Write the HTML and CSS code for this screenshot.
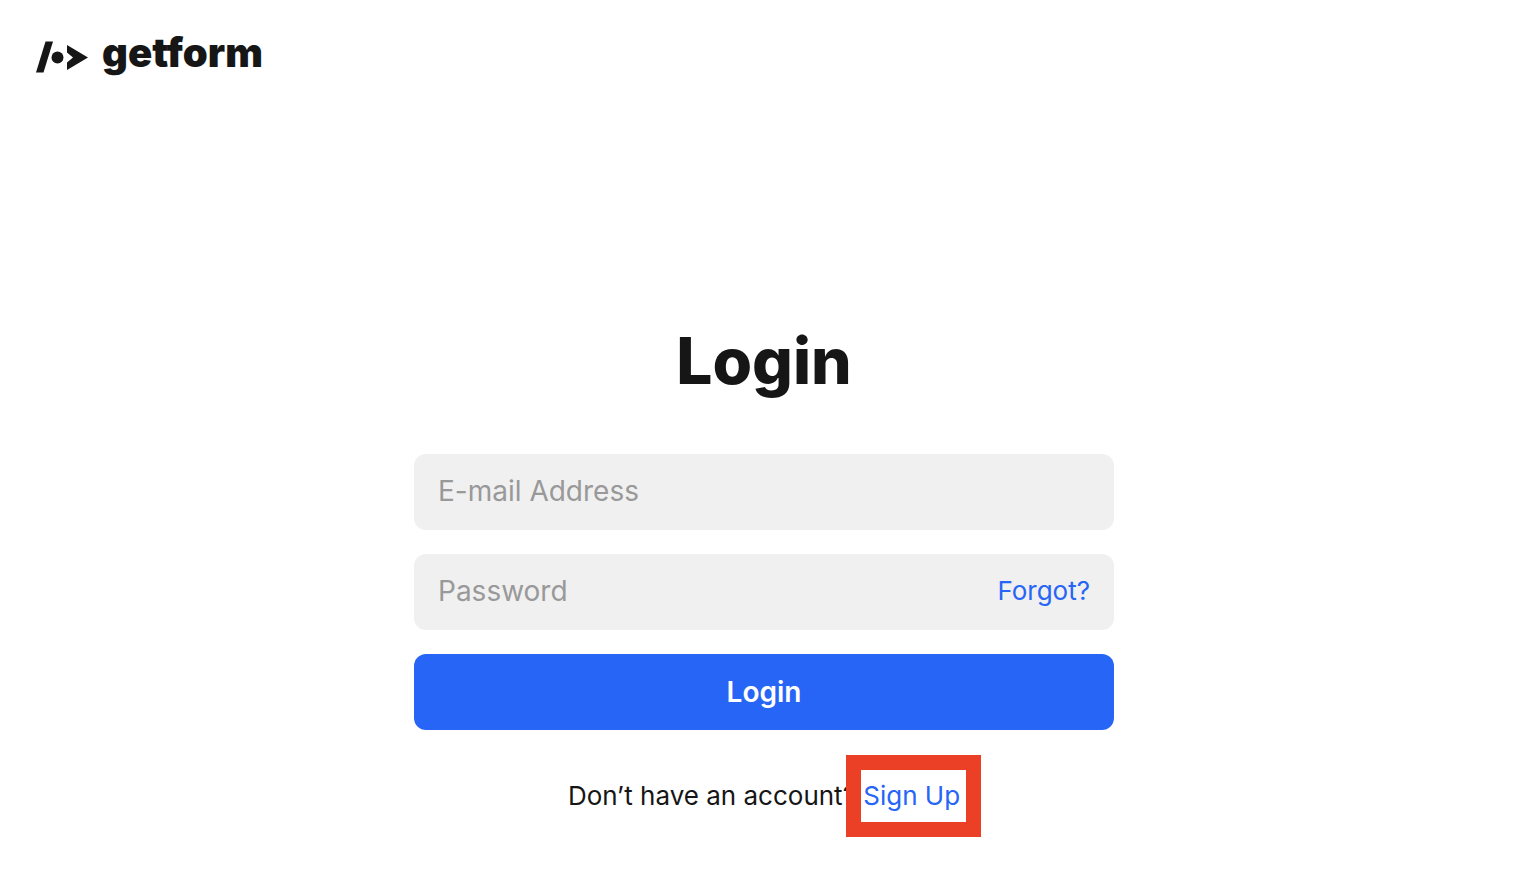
FILE: index.html
```html
<!DOCTYPE html>
<html lang="en">
<head>
<meta charset="utf-8">
<meta name="viewport" content="width=device-width, initial-scale=1">
<title>Login - getform</title>
<link rel="stylesheet" href="styles.css">
</head>
<body>
<header class="header">
  <a class="brand" href="#">
    <svg class="brand-mark" viewBox="0 0 52 32" width="52" height="32" aria-hidden="true">
      <path d="M9.500 0.500h7.500L7.500 31.500H0z"/>
      <circle cx="21.500" cy="16.500" r="6"/>
      <path d="M31 4l21 12.500L31 29v-7.500l6-5-6-5z"/>
    </svg>
    <span class="brand-name">getform</span>
  </a>
</header>
<main class="main">
  <h1 class="title">Login</h1>
  <form class="form">
    <div class="field">
      <input class="input" type="email" placeholder="E-mail Address" aria-label="E-mail Address">
    </div>
    <div class="field">
      <input class="input" type="password" placeholder="Password" aria-label="Password">
      <a class="link" href="#">Forgot?</a>
    </div>
    <button class="submit" type="submit">Login</button>
  </form>
  <p class="signup">Don’t have an account? <a class="link highlighted" href="#">Sign Up</a></p>
</main>
</body>
</html>
```
FILE: styles.css
```css
* {
  box-sizing: border-box;
}

body {
  margin: 0;
  background: #fff;
  color: #161616;
  font-family: Inter, "Liberation Sans", sans-serif;
}

.header {
  padding: 30px 36px;
}

.brand {
  display: inline-flex;
  align-items: center;
  gap: 14px;
  color: inherit;
  text-decoration: none;
}

.brand-mark {
  margin-top: 8px;
  fill: currentColor;
}

.brand-name {
  font-size: 40px;
  line-height: 46px;
  font-weight: 900;
}

.main {
  display: flex;
  flex-direction: column;
  align-items: center;
  padding: 215px 24px 40px;
}

.title {
  margin: 0 0 54px;
  font-size: 64px;
  line-height: 78px;
  font-weight: 800;
}

.form {
  display: flex;
  flex-direction: column;
  gap: 24px;
  width: 100%;
  max-width: 700px;
}

.field {
  display: flex;
  align-items: center;
  height: 76px;
  padding: 0 24px 2px;
  border-radius: 12px;
  background: #f0f0f0;
}

.input {
  flex: 1;
  min-width: 0;
  padding: 0;
  border: 0;
  outline: 0;
  background: transparent;
  color: inherit;
  font: inherit;
  font-size: 28px;
}

.input::placeholder {
  color: #999;
}

.link {
  color: #2765f6;
  font-size: 26px;
  line-height: 32px;
  text-decoration: none;
}

.submit {
  height: 76px;
  border: 0;
  border-radius: 12px;
  background: #2765f6;
  color: #fff;
  font: inherit;
  font-size: 28px;
  font-weight: 600;
}

.signup {
  margin: 50px 0 0;
  font-size: 26px;
  line-height: 32px;
}

.highlighted {
  position: relative;
}

/* Callout frame around the link */
.highlighted::after {
  content: "";
  position: absolute;
  inset: -25px -21px -26px -17px;
  border: 15px solid #ec4026;
}
```
